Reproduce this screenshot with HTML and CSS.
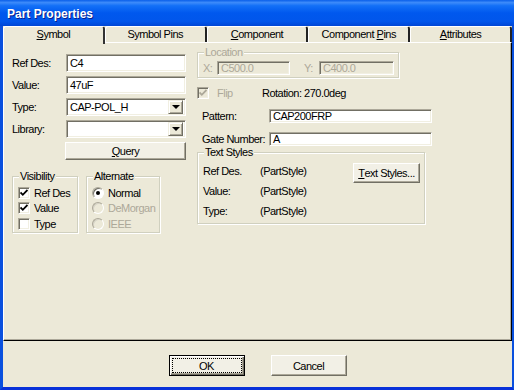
FILE: index.html
```html
<!DOCTYPE html>
<html>
<head>
<meta charset="utf-8">
<title>Part Properties</title>
<link rel="stylesheet" href="styles.css">
</head>
<body>
<div class="window">
  <div class="titlebar"><span class="title">Part Properties</span></div>
  <div class="client">
    <div class="tabs">
      <div class="tab active"><u>S</u>ymbol</div>
      <div class="tab">Symbol Pins</div>
      <div class="tab"><u>C</u>omponent</div>
      <div class="tab">Component <u>P</u>ins</div>
      <div class="tab"><u>A</u>ttributes</div>
    </div>
    <div class="panel">
      <div class="col-left">
        <div class="row"><span class="lbl">Ref Des:</span><div class="edit w120">C4</div></div>
        <div class="row"><span class="lbl">Value:</span><div class="edit w120">47uF</div></div>
        <div class="row"><span class="lbl">Type:</span><div class="edit combo w120"><span class="combo-text">CAP-POL_H</span><span class="drop"><span class="tri"></span></span></div></div>
        <div class="row"><span class="lbl">Library:</span><div class="edit combo w120"><span class="combo-text"></span><span class="drop"><span class="tri"></span></span></div></div>
        <div class="btn query"><u>Q</u>uery</div>
        <div class="groups">
          <fieldset class="group vis">
            <legend>Visibility</legend>
            <div class="opt"><span class="chk"><svg width="8" height="8" viewBox="0 0 8 8"><path d="M0.5 3.5 L2.8 5.8 L7.5 1" fill="none" stroke="#000" stroke-width="1.8"/></svg></span>Ref Des</div>
            <div class="opt"><span class="chk"><svg width="8" height="8" viewBox="0 0 8 8"><path d="M0.5 3.5 L2.8 5.8 L7.5 1" fill="none" stroke="#000" stroke-width="1.8"/></svg></span>Value</div>
            <div class="opt"><span class="chk"></span>Type</div>
          </fieldset>
          <fieldset class="group alt">
            <legend>Alternate</legend>
            <div class="opt"><span class="radio"><span class="dot"></span></span>Normal</div>
            <div class="opt dis"><span class="radio off"></span>DeMorgan</div>
            <div class="opt dis"><span class="radio off"></span>IEEE</div>
          </fieldset>
        </div>
      </div>
      <div class="col-right">
        <fieldset class="group loc">
          <legend class="dis">Location</legend>
          <div class="loc-row">
            <span class="xl dis">X:</span><div class="edit disabled wx">C500.0</div>
            <span class="yl dis">Y:</span><div class="edit disabled wy">C400.0</div>
          </div>
        </fieldset>
        <div class="flip-row">
          <div class="flip dis"><span class="chk off"><svg width="8" height="8" viewBox="0 0 8 8"><path d="M0.5 3.5 L2.8 5.8 L7.5 1" fill="none" stroke="#ACA899" stroke-width="1.8"/></svg></span>Flip</div>
          <span>Rotation: 270.0de<u>g</u></span>
        </div>
        <div class="frow first"><span class="rlbl">Pattern:</span><div class="edit small wp">CAP200FRP</div></div>
        <div class="frow"><span class="rlbl">Gate Number:</span><div class="edit small wp">A</div></div>
        <fieldset class="group ts">
          <legend>Text Styles</legend>
          <div class="ts-grid">
            <span>Ref Des.</span><span>(PartStyle)</span>
            <span>Value:</span><span>(PartStyle)</span>
            <span>Type:</span><span>(PartStyle)</span>
          </div>
          <div class="btn tsbtn"><u>T</u>ext Styles...</div>
        </fieldset>
      </div>
    </div>
    <div class="actions">
      <div class="btn dlg default"><span class="focus">OK</span></div>
      <div class="btn dlg">Cancel</div>
    </div>
  </div>
</div>
</body>
</html>
```

FILE: styles.css
```css
* { box-sizing: border-box; }
html, body { margin: 0; padding: 0; }
body {
  width: 514px;
  height: 390px;
  overflow: hidden;
  font-family: "Liberation Sans", Arial, sans-serif;
  font-size: 11px;
  letter-spacing: -0.5px;
  color: #000;
  background: #0855DD;
}
u { text-decoration: underline; text-underline-offset: 1px; }

.window {
  width: 514px;
  height: 390px;
  display: flex;
  flex-direction: column;
  background: #0A55E6;
  border-left: 3px solid #0A50DE;
  border-right: 2px solid #0A50DE;
  border-bottom: 3px solid #0831D9;
}
.titlebar {
  height: 26px;
  margin-left: -3px;
  margin-right: -2px;
  padding: 2px 0 0 7px;
  line-height: 24px;
  background: linear-gradient(to bottom, #0A5FE9 0%, #3D8BFA 10%, #1370F7 22%, #0058EE 50%, #0156EB 82%, #0046D5 100%);
}
.title {
  color: #fff;
  font-weight: bold;
  font-size: 12px;
  letter-spacing: 0;
  text-shadow: 1px 1px 0 #0A1E8C;
}
.client {
  flex: 1;
  background: #ECE9D8;
  display: flex;
  flex-direction: column;
}

/* tabs */
.tabs {
  height: 17px;
  display: flex;
}
.tab {
  flex: 1;
  height: 17px;
  line-height: 15px;
  text-align: center;
  border-top: 1px solid #fff;
  border-left: 1px solid #fff;
  border-right: 2px solid #222;
  border-bottom: 1px solid #000;
  border-radius: 3px 3px 0 0;
  background: #ECE9D8;
}
.tab.active {
  border-bottom: none;
  height: 18px;
  position: relative;
  z-index: 1;
  border-right-color: #333;
}

/* panel */
.panel {
  height: 299px;
  margin-top: -1px;
  border-top: 1px solid #fff;
  border-left: 1px solid #fff;
  border-right: 1px solid #000;
  border-bottom: 1px solid #000;
  box-shadow: inset -1px -1px 0 #ACA899;
  padding: 3px 0 0 8px;
  display: flex;
  gap: 11px;
}
.col-left {
  width: 174px;
  padding-top: 8px;
}
.row {
  display: flex;
  align-items: center;
  height: 18px;
  margin-bottom: 4px;
}
.lbl { width: 54px; }

.edit {
  height: 18px;
  background: #fff;
  border: 1px solid;
  border-color: #ACA899 #fff #fff #ACA899;
  box-shadow: inset 1px 1px 0 #716F64, inset -1px -1px 0 #F1EFE2;
  padding: 0 3px;
  display: flex;
  align-items: center;
  white-space: nowrap;
}
.w120 { width: 120px; }
.combo { padding: 0 2px 0 3px; }
.combo-text { flex: 1; }
.drop {
  width: 15px;
  height: 14px;
  background: #ECE9D8;
  border: 1px solid;
  border-color: #F1EFE2 #716F64 #716F64 #F1EFE2;
  box-shadow: inset 1px 1px 0 #fff, inset -1px -1px 0 #ACA899;
  display: flex;
  align-items: center;
  justify-content: center;
}
.tri {
  width: 0;
  height: 0;
  border-left: 4px solid transparent;
  border-right: 4px solid transparent;
  border-top: 4px solid #000;
}

.btn {
  background: #F2F0E6;
  border: 1px solid;
  border-color: #fff #716F64 #716F64 #fff;
  box-shadow: inset -1px -1px 0 #ACA899;
  display: flex;
  align-items: center;
  justify-content: center;
  white-space: nowrap;
}
.query {
  margin-left: 53px;
  width: 121px;
  height: 18px;
}

.groups {
  display: flex;
  gap: 8px;
  margin-top: 10px;
}
fieldset.group {
  margin: 0;
  min-width: 0;
  border: 1px solid #D0D0BF;
  box-shadow: inset 1px 1px 0 #fff, 1px 1px 0 #fff;
  padding: 2px 4px 2px 5px;
}
fieldset.group legend {
  padding: 0 1px;
  margin-left: 1px;
  line-height: 13px;
  background: #ECE9D8;
}
.vis { width: 66px; height: 63px; }
.alt { width: 74px; height: 63px; padding-left: 5px; }
.opt {
  display: flex;
  align-items: center;
  height: 15.5px;
  white-space: nowrap;
}
.chk {
  width: 12px;
  height: 12px;
  flex: none;
  margin-right: 4px;
  background: #fff;
  border: 1px solid;
  border-color: #ACA899 #fff #fff #ACA899;
  box-shadow: inset 1px 1px 0 #716F64, inset -1px -1px 0 #F1EFE2;
  display: flex;
  align-items: center;
  justify-content: center;
}
.chk.off { background: #ECE9D8; }
.radio {
  width: 12px;
  height: 12px;
  flex: none;
  margin-right: 4px;
  border-radius: 50%;
  background: #fff;
  border: 1px solid;
  border-color: #ACA899 #fff #fff #ACA899;
  box-shadow: inset 1px 1px 0 #716F64;
  display: flex;
  align-items: center;
  justify-content: center;
}
.radio.off { background: #ECE9D8; box-shadow: inset 1px 1px 0 #D6D3C6; }
.dot { width: 4px; height: 4px; border-radius: 50%; background: #000; }
.dis { color: #ACA899; }

/* right column */
.col-right {
  width: 236px;
}
.loc {
  margin-left: 4px;
  width: 202px;
  padding: 2px 4px 5px 5px;
}
.loc-row {
  display: flex;
  align-items: center;
  height: 14px;
}
.xl { width: 14px; }
.yl { width: 15px; margin-left: 14px; }
.edit.disabled {
  background: #ECE9D8;
  color: #ACA899;
  height: 14px;
}
.wx { width: 73px; }
.wy { width: 75px; }

.flip-row {
  margin-top: 8px;
  height: 13px;
  display: flex;
  align-items: center;
}
.flip {
  width: 65px;
  display: flex;
  align-items: center;
}
.flip .chk { margin-right: 8px; }

.frow {
  display: flex;
  align-items: center;
  margin-top: 9px;
  height: 14px;
}
.frow.first { margin-top: 10px; }
.rlbl { width: 67px; margin-left: 5px; }
.edit.small { height: 14px; }
.wp { width: 163px; }

.ts {
  margin-top: 5px;
  margin-left: 4px;
  width: 228px;
  padding: 2px 5px 4px 7px;
  display: flex;
  align-items: flex-start;
}
.ts legend { margin-left: 1px; }
.ts-grid {
  display: grid;
  grid-template-columns: 57px auto;
  grid-auto-rows: 20px;
  align-items: center;
}
.tsbtn {
  margin-left: auto;
  margin-top: 2px;
  width: 67px;
  height: 20px;
}

/* bottom actions */
.actions {
  display: flex;
  justify-content: center;
  gap: 26px;
  margin-top: 14px;
}
.dlg {
  width: 76px;
  height: 21px;
}
.dlg.default {
  border: 1px solid #000;
  box-shadow: inset 1px 1px 0 #fff, inset -1px -1px 0 #716F64, inset -2px -2px 0 #ACA899;
  padding: 3px;
}
.focus {
  flex: 1;
  align-self: stretch;
  display: flex;
  align-items: center;
  justify-content: center;
  outline: 1px dotted #000;
}
```
